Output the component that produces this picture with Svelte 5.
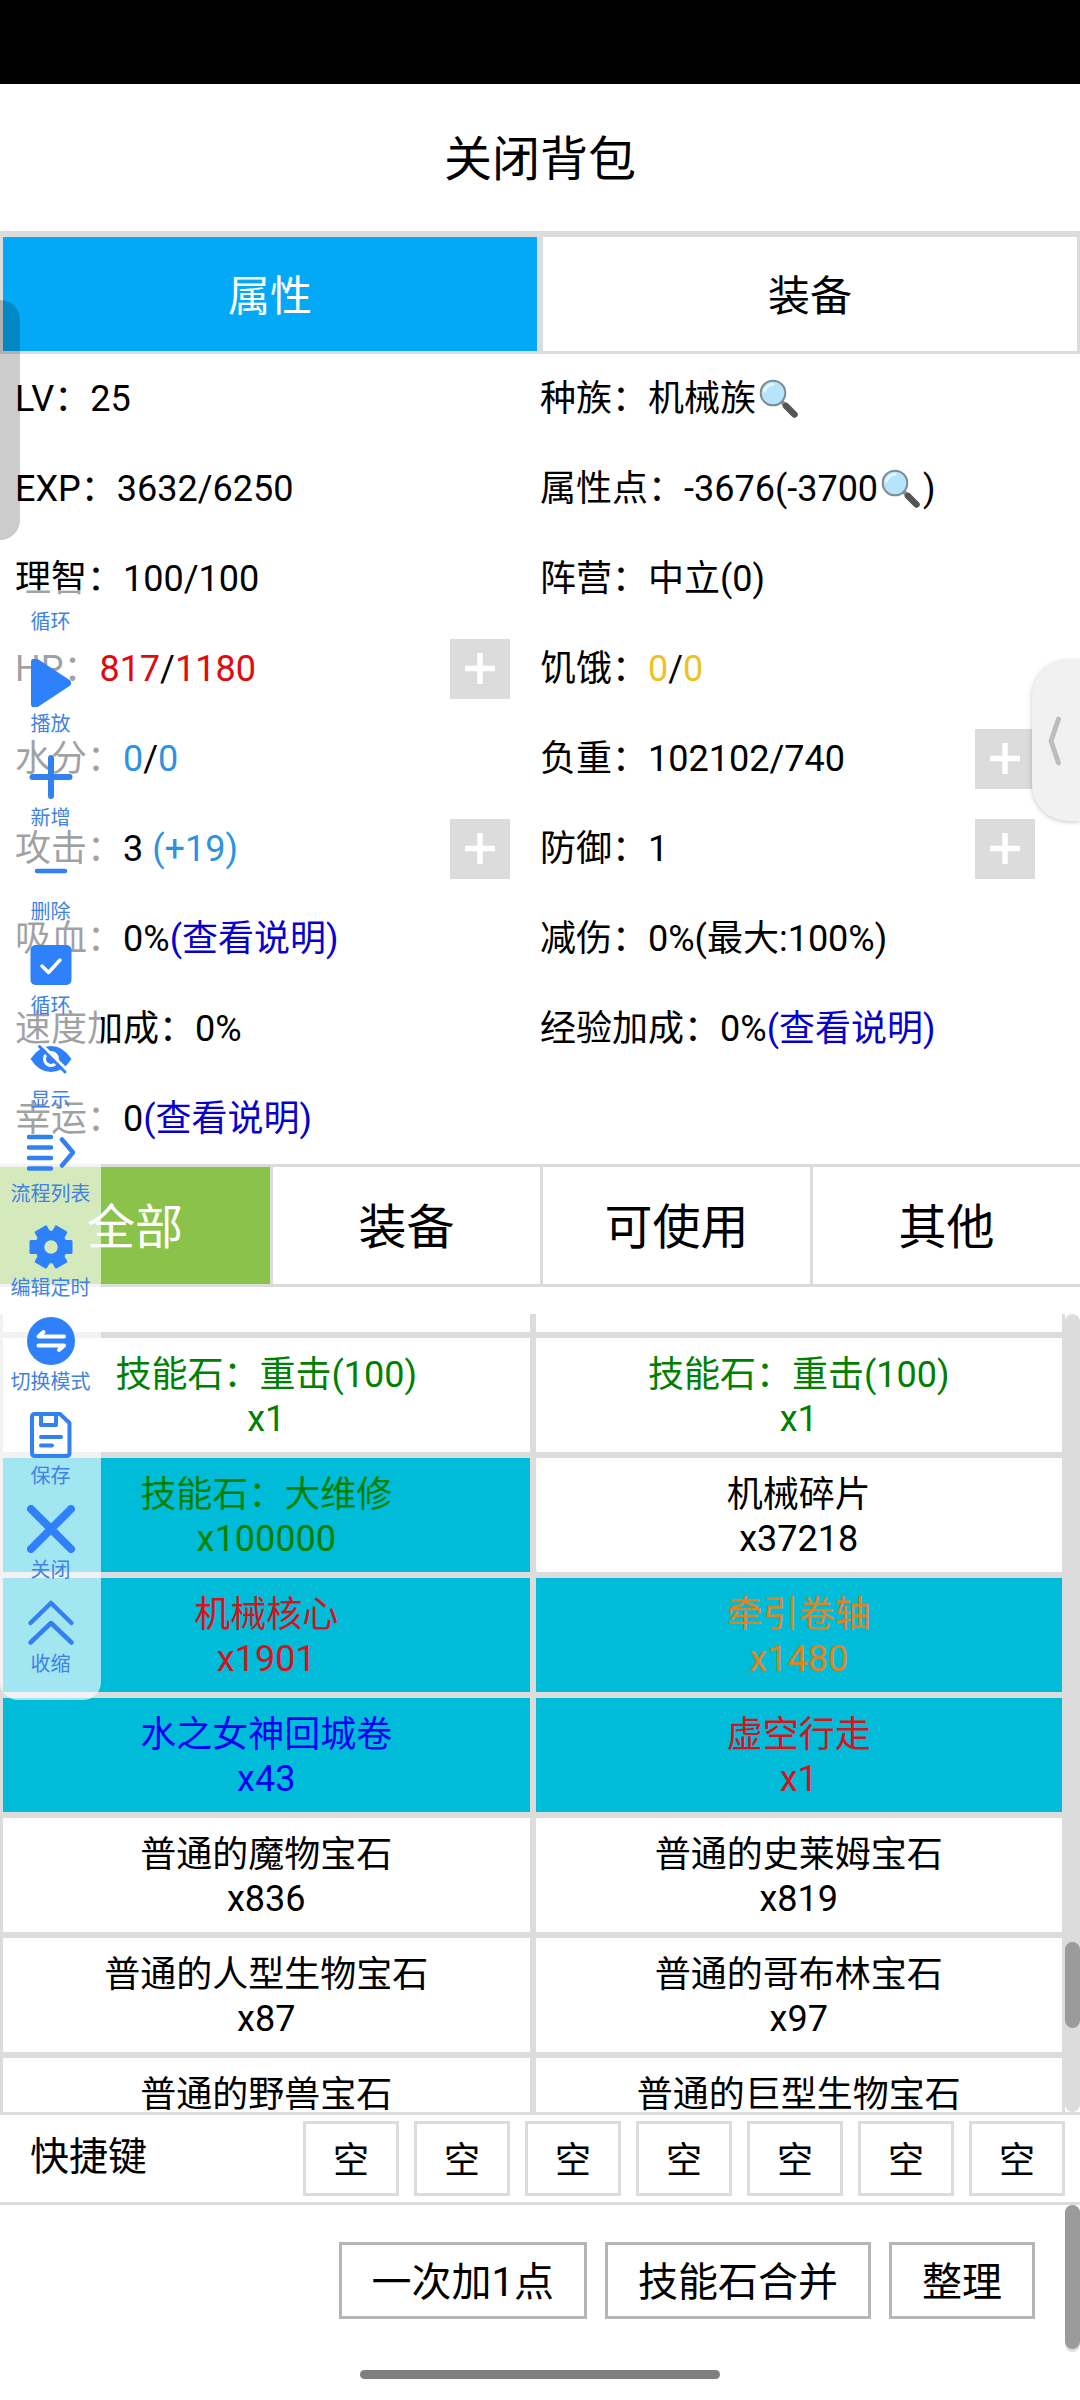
<script>
    const stats = [
        { label: 'LV', parts: [['25']] },
        { label: '种族', parts: [['机械族'], ['', 'search']] },
        { label: 'EXP', parts: [['3632/6250']] },
        { label: '属性点', parts: [['-3676(-3700'], ['', 'search'], [')']] },
        { label: '理智', parts: [['100/100']] },
        { label: '阵营', parts: [['中立(0)']] },
        { label: 'HP', parts: [['817', 'red'], ['/'], ['1180', 'red']], add: true },
        { label: '饥饿', parts: [['0', 'yellow'], ['/'], ['0', 'yellow']] },
        { label: '水分', parts: [['0', 'blue'], ['/'], ['0', 'blue']] },
        { label: '负重', parts: [['102102/740']], add: true },
        { label: '攻击', parts: [['3 '], ['(+19)', 'blue']], add: true },
        { label: '防御', parts: [['1']], add: true },
        { label: '吸血', parts: [['0%'], ['(查看说明)', 'link']] },
        { label: '减伤', parts: [['0%(最大:100%)']] },
        { label: '速度加成', parts: [['0%']] },
        { label: '经验加成', parts: [['0%'], ['(查看说明)', 'link']] },
        { label: '幸运', parts: [['0'], ['(查看说明)', 'link']] }
    ];

    const filters = ['全部', '装备', '可使用', '其他'];

    const items = [
        { name: '技能石：重击(100)', count: 1, color: 'green' },
        { name: '技能石：重击(100)', count: 1, color: 'green' },
        { name: '技能石：大维修', count: 100000, color: 'green', active: true },
        { name: '机械碎片', count: 37218 },
        { name: '机械核心', count: 1901, color: 'crimson', active: true },
        { name: '牵引卷轴', count: 1480, color: 'orange', active: true },
        { name: '水之女神回城卷', count: 43, color: 'pure-blue', active: true },
        { name: '虚空行走', count: 1, color: 'crimson', active: true },
        { name: '普通的魔物宝石', count: 836 },
        { name: '普通的史莱姆宝石', count: 819 },
        { name: '普通的人型生物宝石', count: 87 },
        { name: '普通的哥布林宝石', count: 97 },
        { name: '普通的野兽宝石' },
        { name: '普通的巨型生物宝石' }
    ];

    const slots = Array(7).fill('空');
    const actions = ['一次加1点', '技能石合并', '整理'];

    const tools = [
        { icon: 'play', text: '播放' },
        { icon: 'plus', text: '新增' },
        { icon: 'minus', text: '删除' },
        { icon: 'check', text: '循环' },
        { icon: 'eye', text: '显示' },
        { icon: 'list', text: '流程列表' },
        { icon: 'gear', text: '编辑定时' },
        { icon: 'switch', text: '切换模式' },
        { icon: 'save', text: '保存' },
        { icon: 'close', text: '关闭' },
        { icon: 'fold', text: '收缩' }
    ];

    let tab = 0;
    let filter = 0;
</script>

<div class="screen" lang="zh-CN">
    <div class="status-bar"></div>
    <header class="title">关闭背包</header>

    <div class="tabs">
        {#each ['属性', '装备'] as name, i}
            <div class="tab" class:active={tab === i} on:click={() => (tab = i)} role="presentation">{name}</div>
        {/each}
    </div>

    <div class="stats">
        {#each stats as stat}
            <div class="stat">
                <div class="stat-text">
                    <span>{stat.label}：</span>{#each stat.parts as [text, kind]}{#if kind === 'search'}<svg class="search" viewBox="0 0 45 44">
                        <path d="M26 25 L30 29" stroke="#8b8b8b" stroke-width="4" />
                        <path d="M30 29 L38.500 37.500" stroke="#555" stroke-width="6.500" stroke-linecap="round" />
                        <circle cx="17" cy="16" r="12.300" fill="#b5e4fb" stroke="#7d8b92" stroke-width="2" />
                        <path d="M8.500 14 A9 9 0 0 1 17 7.500" fill="none" stroke="#e4f6ff" stroke-width="3" stroke-linecap="round" />
                    </svg>{:else}<span class={kind}>{text}</span>{/if}{/each}
                </div>
                {#if stat.add}
                    <div class="add">
                        <svg viewBox="0 0 60 60"><path d="M15 29.500 H45 M30 14 V45" stroke="#fff" stroke-width="5.500" /></svg>
                    </div>
                {/if}
            </div>
        {/each}
    </div>

    <div class="filters">
        {#each filters as name, i}
            <div class="filter" class:active={filter === i} on:click={() => (filter = i)} role="presentation">{name}</div>
        {/each}
    </div>

    <div class="bag">
        <div class="items">
            <div class="item tail"></div>
            <div class="item tail"></div>
            {#each items as item}
                <div class={`item ${item.color || ''}`} class:active={item.active}>
                    <span>{item.name}</span>
                    {#if item.count}
                        <span>x{item.count}</span>
                    {/if}
                </div>
            {/each}
        </div>
        <div class="track"><div class="thumb"></div></div>
    </div>

    <div class="shortcuts">
        <span class="shortcuts-label">快捷键</span>
        {#each slots as slot}
            <div class="slot">{slot}</div>
        {/each}
    </div>

    <footer class="footer">
        <div class="actions">
            {#each actions as action}
                <button>{action}</button>
            {/each}
        </div>
        <div class="track short"><div class="thumb"></div></div>
    </footer>

    <div class="home"></div>
    <div class="edge"></div>

    <div class="handle">
        <svg viewBox="0 0 16 50"><path d="M11.500 3 L4 25 L11.500 47" fill="none" stroke="#bdbdbd" stroke-width="5" stroke-linecap="round" stroke-linejoin="round" /></svg>
    </div>

    <div class="toolbar">
        <span class="tool-text first">循环</span>
        {#each tools as tool}
            <div class="tool">
                <svg viewBox="0 0 48 48" fill="none" stroke="#3381f0" stroke-width="6" stroke-linecap="round" stroke-linejoin="round">
                    {#if tool.icon === 'play'}
                        <path d="M8 3 L8 45 L40 24 Z" fill="#2e80fb" stroke="#2e80fb" stroke-width="8" />
                    {:else if tool.icon === 'plus'}
                        <path d="M5.500 24 H42.500 M24 5 V43" />
                    {:else if tool.icon === 'minus'}
                        <path d="M10 24 H38" stroke-width="4.500" />
                    {:else if tool.icon === 'check'}
                        <rect x="3.500" y="4" width="41" height="40" rx="5" fill="#2e80fb" stroke="none" />
                        <path d="M15 25 L21.500 31.500 L33 19" stroke="#fff" stroke-width="3.500" />
                    {:else if tool.icon === 'eye'}
                        <path d="M3.500 24 Q12 11 24 11 Q36 11 44.500 24 Q36 37 24 37 Q12 37 3.500 24 Z" fill="#2e80fb" stroke="none" />
                        <circle cx="24" cy="24" r="6.500" stroke="#fff" stroke-width="3" />
                        <path d="M15 10 L41 36" stroke="#fff" stroke-width="3" />
                        <path d="M12.500 11.500 L38 37" stroke-width="3" />
                    {:else if tool.icon === 'list'}
                        <path d="M2 8 H24 M2 18.500 H24 M2 29 H24 M2 39.500 H24 M35 10.500 L46 23.500 L35 36.500" stroke-width="4.500" />
                    {:else if tool.icon === 'gear'}
                        <circle cx="24" cy="24" r="11.500" stroke="#2e80fb" stroke-width="9.500" />
                        {#each [0, 60, 120, 180, 240, 300] as angle}
                            <rect x="37" y="18.500" width="7" height="11" transform={`rotate(${angle} 24 24)`} fill="#2e80fb" stroke="#2e80fb" stroke-width="3" />
                        {/each}
                    {:else if tool.icon === 'switch'}
                        <circle cx="24" cy="24" r="24" fill="#2e80fb" stroke="none" />
                        <path d="M16.500 15 L11.500 19.500 H37 M11.500 28.500 H37 L32 33" stroke="#fff" stroke-width="4" />
                    {:else if tool.icon === 'save'}
                        <path d="M8 3 H33 L42.500 12 V42 Q42.500 45 39.500 45 H8 Q5 45 5 42 V6 Q5 3 8 3 Z M14 4 V14 H29 V4" stroke-width="4" />
                        <path d="M14 26 H34 M14 34.500 H25" stroke-width="4" />
                    {:else if tool.icon === 'close'}
                        <path d="M4 4 L44 44 M44 4 L4 44" stroke="#2e80fb" stroke-width="8" />
                    {:else}
                        <path d="M3.500 24 L24 4 L44.500 24 M3.500 43.500 L24 24 L44.500 43.500" stroke-width="4.500" />
                    {/if}
                </svg>
                <span class="tool-text">{tool.text}</span>
            </div>
        {/each}
    </div>
</div>

<style>
    :global(body) {
        background: #fff;
    }
    .screen {
        position: relative;
        display: flex;
        flex-direction: column;
        width: 1080px;
        height: 2400px;
        overflow: hidden;
        background: #fff;
        color: #000;
        font-family: Roboto, 'Noto Sans CJK SC', sans-serif;
        font-size: 36px;
        line-height: 1.2;
    }
    .screen * {
        box-sizing: border-box;
    }
    svg {
        display: block;
    }
    .status-bar {
        height: 84px;
        background: #000;
    }
    .title {
        display: flex;
        align-items: center;
        justify-content: center;
        height: 150px;
        padding-top: 5px;
        border-bottom: 3px solid #dcdcdc;
        font-size: 48px;
    }
    .tabs {
        display: flex;
        height: 120px;
    }
    .tab {
        display: flex;
        flex: 1;
        align-items: center;
        justify-content: center;
        padding-top: 6px;
        border: 3px solid #dcdcdc;
        font-size: 42px;
    }
    .tab.active {
        background: #03a9f7;
        color: #fff;
    }

    .stats {
        display: grid;
        grid-template-columns: 1fr 1fr;
        grid-auto-rows: 90px;
        padding: 0 15px;
    }
    .stat {
        display: flex;
        align-items: center;
        justify-content: space-between;
        padding-right: 30px;
        white-space: nowrap;
    }
    .stat-text {
        line-height: 60px;
    }
    .stat-text span {
        white-space: pre;
    }
    .search {
        display: inline-block;
        width: 45px;
        height: 44px;
        vertical-align: -10px;
    }
    .add {
        width: 60px;
        height: 60px;
        background: #dcdcdc;
    }
    .red {
        color: #e10a0d;
    }
    .yellow {
        color: #efbf28;
    }
    .blue {
        color: #2f92df;
    }
    .link {
        color: #0800cd;
    }

    .filters {
        display: flex;
        height: 123px;
        border-top: 3px solid #dcdcdc;
        border-bottom: 3px solid #dcdcdc;
    }
    .filter {
        display: flex;
        align-items: center;
        justify-content: center;
        width: 270px;
        padding-top: 5px;
        border-left: 3px solid #dcdcdc;
        font-size: 48px;
    }
    .filter:first-child {
        border-left: none;
    }
    .filter.active {
        background: #8bc34a;
        color: #fff;
    }

    .bag {
        display: flex;
        height: 798px;
        margin-top: 27px;
        overflow: hidden;
    }
    .items {
        display: grid;
        flex: 1;
        grid-template-columns: 1fr 1fr;
        grid-template-rows: 21px;
        grid-auto-rows: 120px;
    }
    .item {
        display: flex;
        flex-direction: column;
        align-items: center;
        padding-top: 15px;
        border: 3px solid #dcdcdc;
        line-height: 44px;
    }
    .item.tail {
        padding: 0;
        border-top: none;
    }
    .item.active {
        background: #00bcd8;
    }
    .green {
        color: #008000;
    }
    .crimson {
        color: #d3141c;
    }
    .orange {
        color: #e08420;
    }
    .pure-blue {
        color: #0000f5;
    }
    .track {
        width: 15px;
        border-radius: 8px;
        background: #dcdcdc;
    }
    .thumb {
        height: 86px;
        margin-top: 628px;
        border-radius: 8px;
        background: #9b9b9b;
    }
    .track.short {
        height: 147px;
    }
    .short .thumb {
        height: 144px;
        margin-top: 0;
    }

    .shortcuts {
        display: flex;
        gap: 15px;
        height: 93px;
        padding: 6px 15px 0 30px;
        border-top: 3px solid #dcdcdc;
        border-bottom: 3px solid #dcdcdc;
    }
    .shortcuts-label {
        flex: 1;
        font-size: 39px;
        line-height: 72px;
    }
    .slot {
        display: flex;
        align-items: center;
        justify-content: center;
        width: 96px;
        height: 75px;
        padding-top: 6px;
        border: 3px solid #dcdcdc;
    }

    .footer {
        display: flex;
        justify-content: flex-end;
        gap: 30px;
    }
    .actions {
        display: flex;
        gap: 18px;
        padding-top: 37px;
    }
    .actions button {
        height: 77px;
        padding: 4px 30px 0;
        border: 3px solid #b6b6b6;
        background: #fff;
        color: #000;
        font: 40px/48px Roboto, 'Noto Sans CJK SC', sans-serif;
    }

    .home {
        position: absolute;
        bottom: 21px;
        left: 360px;
        width: 360px;
        height: 9px;
        border-radius: 5px;
        background: #7f7f7f;
    }
    .edge {
        position: absolute;
        top: 300px;
        left: 0;
        width: 20px;
        height: 240px;
        border-radius: 0 20px 20px 0;
        background: rgba(0, 0, 0, 0.2);
    }
    .handle {
        position: absolute;
        top: 660px;
        right: 0;
        display: flex;
        align-items: center;
        width: 48px;
        height: 161px;
        padding-left: 15px;
        border-radius: 36px 0 0 36px;
        background: #f1f1f1;
        box-shadow: 0 1px 5px rgba(0, 0, 0, 0.22);
    }
    .handle svg {
        width: 16px;
        height: 50px;
    }

    .toolbar {
        position: absolute;
        top: 590px;
        left: 0;
        display: flex;
        flex-direction: column;
        align-items: center;
        gap: 18px;
        width: 101px;
        height: 1110px;
        padding-top: 20px;
        border-radius: 0 0 18px 18px;
        background: rgba(255, 255, 255, 0.63);
    }
    .tool {
        display: flex;
        flex-direction: column;
        align-items: center;
        gap: 5px;
    }
    .tool svg {
        width: 48px;
        height: 48px;
    }
    .tool-text {
        color: #3f82e4;
        font-size: 20px;
        line-height: 24px;
        white-space: nowrap;
    }
    .tool .tool-text {
        margin-bottom: -1px;
    }
    .tool-text.first {
        margin-bottom: 7px;
    }
</style>
